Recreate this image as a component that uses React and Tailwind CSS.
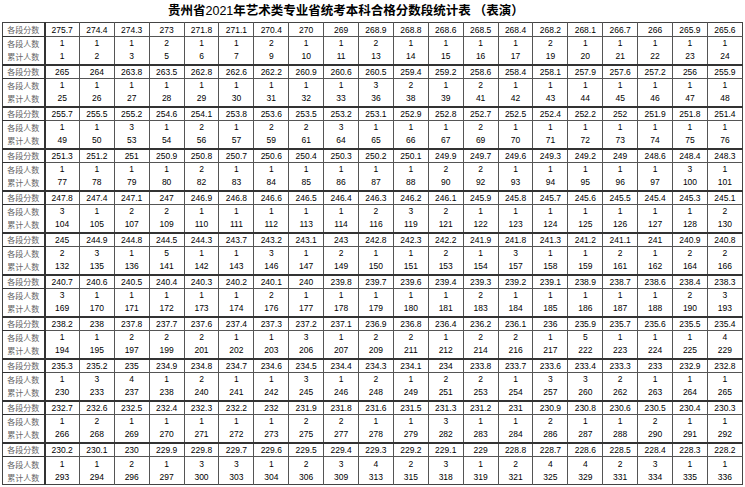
import React from 'react';

const groups = [
  ['275.7 274.4 274.3 273 271.8 271.1 270.4 270 269 268.9 268.8 268.6 268.5 268.4 268.2 268.1 266.7 266 265.9 265.6',
   '1 1 1 2 1 1 2 1 1 2 1 1 1 1 2 1 1 1 1 1',
   '1 2 3 5 6 7 9 10 11 13 14 15 16 17 19 20 21 22 23 24'],
  ['265 264 263.8 263.5 262.8 262.6 262.2 260.9 260.6 260.5 259.4 259.2 258.6 258.4 258.1 257.9 257.6 257.2 256 255.9',
   '1 1 1 1 1 1 1 1 1 3 2 1 2 1 1 1 1 1 1 1',
   '25 26 27 28 29 30 31 32 33 36 38 39 41 42 43 44 45 46 47 48'],
  ['255.7 255.5 255.2 254.6 254.1 253.8 253.6 253.5 253.2 253.1 252.9 252.8 252.7 252.5 252.4 252.2 252 251.9 251.8 251.4',
   '1 1 3 1 2 1 2 2 3 1 1 1 2 1 1 1 1 1 1 1',
   '49 50 53 54 56 57 59 61 64 65 66 67 69 70 71 72 73 74 75 76'],
  ['251.3 251.2 251 250.9 250.8 250.7 250.6 250.4 250.3 250.2 250.1 249.9 249.7 249.6 249.3 249.2 249 248.6 248.4 248.3',
   '1 1 1 1 2 1 1 1 1 1 1 2 2 1 1 1 1 1 3 1',
   '77 78 79 80 82 83 84 85 86 87 88 90 92 93 94 95 96 97 100 101'],
  ['247.8 247.4 247.1 247 246.9 246.8 246.6 246.5 246.4 246.3 246.2 246.1 245.9 245.8 245.7 245.6 245.5 245.4 245.3 245.1',
   '3 1 2 2 1 1 1 1 1 2 3 2 1 1 1 1 1 1 1 2',
   '104 105 107 109 110 111 112 113 114 116 119 121 122 123 124 125 126 127 128 130'],
  ['245 244.9 244.8 244.5 244.3 243.7 243.2 243.1 243 242.8 242.3 242.2 241.9 241.8 241.3 241.2 241.1 241 240.9 240.8',
   '2 3 1 5 1 1 3 1 2 1 1 2 1 3 1 1 2 1 2 2',
   '132 135 136 141 142 143 146 147 149 150 151 153 154 157 158 159 161 162 164 166'],
  ['240.7 240.6 240.5 240.4 240.3 240.2 240.1 240 239.8 239.7 239.6 239.4 239.3 239.2 239.1 238.9 238.7 238.6 238.4 238.3',
   '3 1 1 1 1 1 2 1 1 1 1 1 2 1 1 1 1 1 2 3',
   '169 170 171 172 173 174 176 177 178 179 180 181 183 184 185 186 187 188 190 193'],
  ['238.2 238 237.8 237.7 237.6 237.4 237.3 237.2 237.1 236.9 236.8 236.4 236.2 236.1 236 235.9 235.7 235.6 235.5 235.4',
   '1 1 2 2 2 1 1 3 1 2 2 1 2 2 1 5 1 1 1 4',
   '194 195 197 199 201 202 203 206 207 209 211 212 214 216 217 222 223 224 225 229'],
  ['235.3 235.2 235 234.9 234.8 234.7 234.6 234.5 234.4 234.3 234.1 234 233.8 233.7 233.6 233.4 233.3 233 232.9 232.8',
   '1 3 4 1 2 1 1 3 1 2 1 2 2 1 3 3 2 1 1 1',
   '230 233 237 238 240 241 242 245 246 248 249 251 253 254 257 260 262 263 264 265'],
  ['232.7 232.6 232.5 232.4 232.3 232.2 232 231.9 231.8 231.6 231.5 231.3 231.2 231 230.9 230.8 230.6 230.5 230.4 230.3',
   '1 2 1 1 1 1 1 2 2 1 1 3 1 1 2 1 1 2 1 1',
   '266 268 269 270 271 272 273 275 277 278 279 282 283 284 286 287 288 290 291 292'],
  ['230.2 230.1 230 229.9 229.8 229.7 229.6 229.5 229.4 229.3 229.2 229.1 229 228.8 228.7 228.6 228.5 228.4 228.3 228.2',
   '1 1 2 1 3 3 1 2 3 4 2 3 1 2 4 4 2 3 1 1',
   '293 294 296 297 300 303 304 306 309 313 315 318 319 321 325 329 331 334 335 336'],
].map(([s, c, t]) => ({ scores: s.split(' '), counts: c.split(' '), totals: t.split(' ') }));

const cjk = "font-['Noto_Sans_CJK_SC',sans-serif]";

export default function App() {
  return (
    <div className="w-[745px] h-[487px] bg-white overflow-hidden font-['Liberation_Sans','Noto_Sans_CJK_SC',sans-serif] text-black">
      <div className={`h-[22px] pl-[168px] pt-[2px] text-[12.5px] leading-[15px] font-bold ${cjk}`}>
        贵州省<span className="font-['Liberation_Sans'] font-normal">2021</span>年艺术类专业省统考本科合格分数段统计表 （表演）
      </div>
      <table className="ml-[2px] w-[741px] table-fixed border-collapse text-[8.5px] border border-[#444]">
        <colgroup>
          <col className="w-[42px]" />
          {groups[0].scores.map((_, i) => <col key={i} />)}
        </colgroup>
        <tbody>
          {groups.map((g, gi) => (
            <React.Fragment key={gi}>
              <tr className={`h-[14px] ${gi > 0 ? 'border-t-2' : ''} border-[#333]`}>
                <td className={`border-r-2 border-b border-[#333] text-center text-[#666] text-[8px] leading-[12px] ${cjk}`}>各段分数</td>
                {g.scores.map((s, i) => (
                  <td key={i} className="border-l border-b border-[#555] text-center leading-[12px] p-0">{s}</td>
                ))}
              </tr>
              <tr className="h-[28px]">
                <td className={`border-r-2 border-[#333] text-center text-[#666] text-[8px] p-0 ${cjk}`}>
                  <div className="flex flex-col leading-[13px]">
                    <span>各段人数</span>
                    <span>累计人数</span>
                  </div>
                </td>
                {g.counts.map((c, i) => (
                  <td key={i} className="border-l border-[#555] text-center p-0">
                    <div className="flex flex-col leading-[13px]">
                      <span>{c}</span>
                      <span>{g.totals[i]}</span>
                    </div>
                  </td>
                ))}
              </tr>
            </React.Fragment>
          ))}
        </tbody>
      </table>
    </div>
  );
}
